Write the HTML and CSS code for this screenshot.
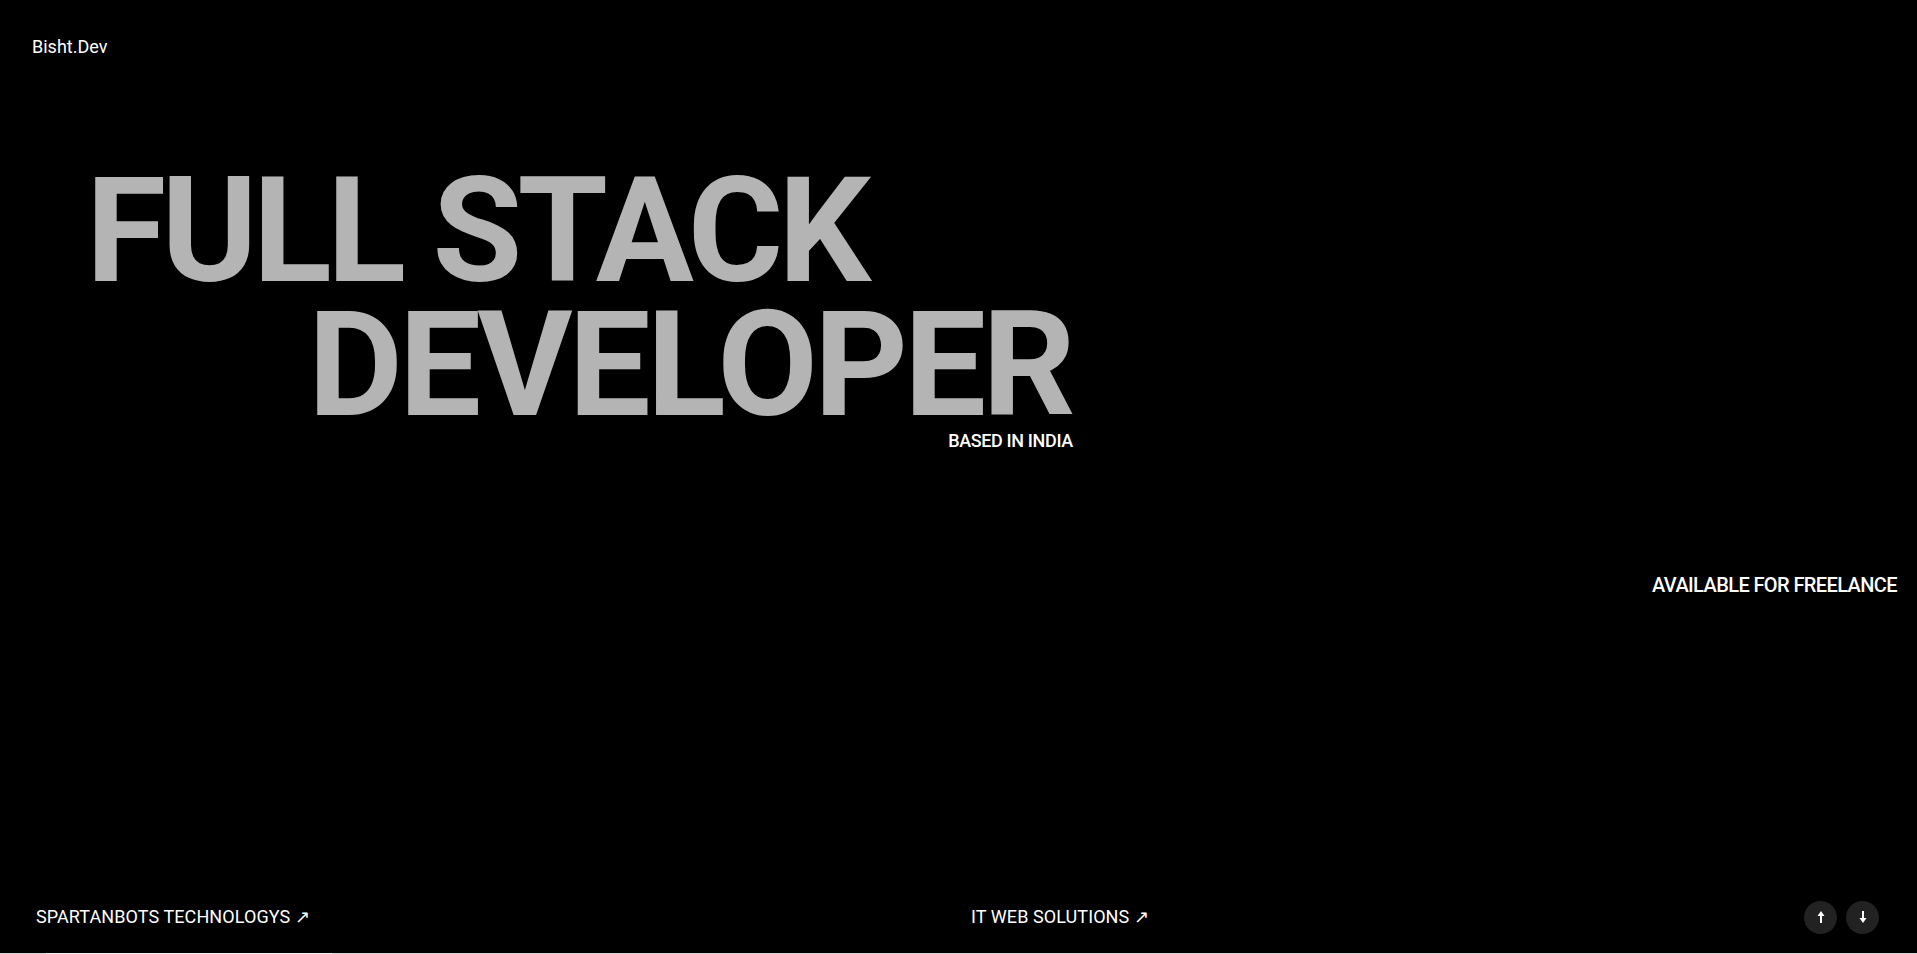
FILE: index.html
```html
<!DOCTYPE html>
<html lang="en">
<head>
<meta charset="utf-8">
<title>Bisht.Dev</title>
<link rel="stylesheet" href="styles.css">
</head>
<body>
<div class="page">
  <header class="header">
    <a class="logo" href="#">Bisht.Dev</a>
  </header>
  <main class="hero">
    <h1 class="title">
      <span class="line line-1">FULL STACK</span>
      <span class="line-2-wrap">
        <span class="line line-2">DEVELOPER</span>
        <span class="based">BASED IN INDIA</span>
      </span>
    </h1>
    <div class="avail-row">
      <p class="avail">AVAILABLE FOR FREELANCE</p>
    </div>
  </main>
  <footer class="footer">
    <a class="flink" href="#">SPARTANBOTS TECHNOLOGYS ↗</a>
    <a class="flink" href="#">IT WEB SOLUTIONS ↗</a>
    <div class="nav-btns">
      <button class="circle" aria-label="Up">
        <svg width="10" height="14" viewBox="0 0 10 14"><path d="M5 1 L8.5 6 L6 6 L6 13 L4 13 L4 6 L1.5 6 Z" fill="#fff"/></svg>
      </button>
      <button class="circle" aria-label="Down">
        <svg width="10" height="14" viewBox="0 0 10 14"><path d="M5 13 L8.5 8 L6 8 L6 1 L4 1 L4 8 L1.5 8 Z" fill="#fff"/></svg>
      </button>
    </div>
  </footer>
  <div class="hscroll"><div class="thumb"></div></div>
</div>
</body>
</html>
```
FILE: styles.css
```css
* { box-sizing: border-box; }
html, body { margin: 0; padding: 0; background: #000; }
body {
  font-family: Roboto, "Liberation Sans", Arial, sans-serif;
  color: #fff;
  overflow: hidden;
}
a { color: inherit; text-decoration: none; }

.page {
  height: 954px;
  display: flex;
  flex-direction: column;
}

.header {
  padding: 37px 32px 0;
}
.logo {
  display: block;
  font-size: 18px;
  line-height: 20px;
  font-weight: 400;
  letter-spacing: 0;
}

.hero {
  flex: 1;
  display: flex;
  flex-direction: column;
}
.title {
  margin: 108px 0 0 86px;
  font-size: 146px;
  line-height: 134px;
  font-weight: 700;
  color: #b4b4b4;
  display: flex;
  flex-direction: column;
  align-items: flex-start;
}
.line { display: block; white-space: nowrap; }
.line-1 { letter-spacing: -0.033em; }
.line-2 { letter-spacing: -0.027em; }
.line-2-wrap {
  margin-left: 222px;
  display: flex;
  flex-direction: column;
  align-items: flex-end;
}
.based {
  margin-top: -2px;
  margin-right: -1px;
  font-size: 18px;
  line-height: 20px;
  font-weight: 500;
  letter-spacing: -0.02em;
  color: #fff;
}

.avail-row {
  display: flex;
  justify-content: flex-end;
  padding-right: 20px;
  margin-top: 122px;
}
.avail {
  margin: 0;
  font-size: 20px;
  line-height: 24px;
  font-weight: 500;
  letter-spacing: -0.03em;
}

.footer {
  height: 72px;
  display: grid;
  grid-template-columns: 935px 1fr auto;
  align-items: center;
  padding: 0 38px 0 36px;
}
.flink {
  font-size: 18px;
  line-height: 20px;
  font-weight: 400;
  letter-spacing: 0.005em;
  white-space: nowrap;
}
.nav-btns {
  display: flex;
  gap: 9px;
}
.circle {
  width: 33px;
  height: 33px;
  border-radius: 50%;
  border: 0;
  padding: 0;
  background: #222;
  display: flex;
  align-items: center;
  justify-content: center;
}
.circle svg { display: block; }

.hscroll {
  height: 1px;
  background: #d4d4d4;
  padding-left: 46px;
}
.thumb {
  width: 286px;
  height: 1px;
  background: #f2f2f2;
}
```
